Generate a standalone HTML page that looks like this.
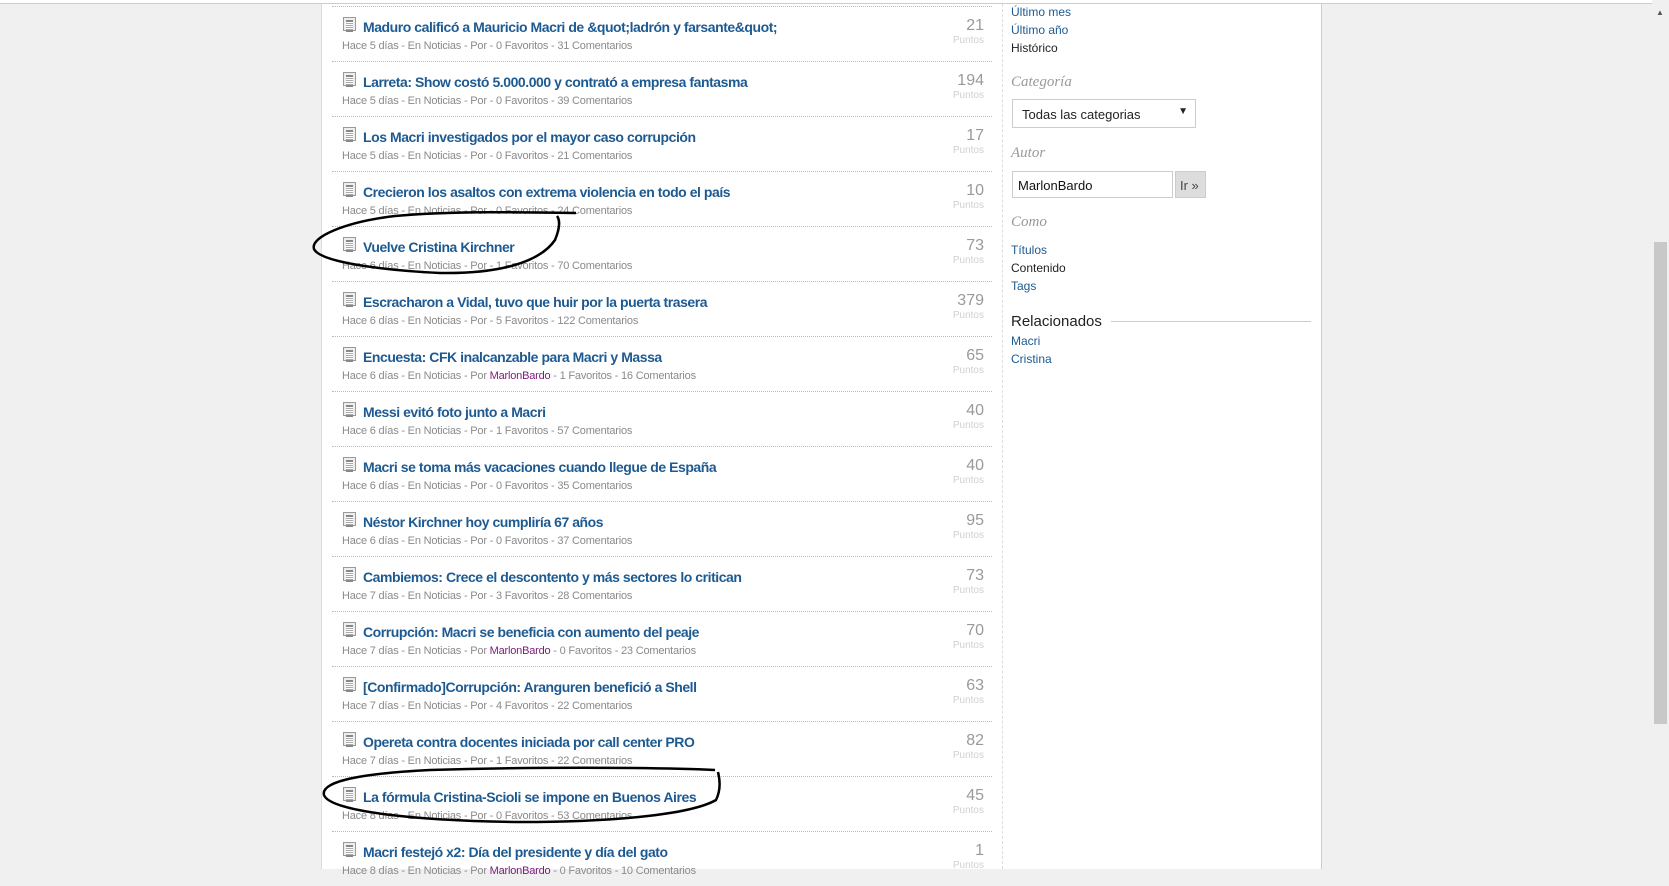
<!DOCTYPE html>
<html><head><meta charset="utf-8"><style>
*{margin:0;padding:0;box-sizing:border-box}
body{width:1669px;height:869px;overflow:hidden;background:#f0f0f0;font-family:"Liberation Sans",sans-serif;position:relative}
#panel{position:absolute;left:321px;top:4px;width:1001px;height:865px;background:#fff;border-left:1px solid #ddd;border-right:1px solid #ccc}
#topline{position:absolute;left:0;top:0;width:1652px;height:4px;background:#fff;border-bottom:1px solid #ccc}
.vline{position:absolute;left:1002px;top:4px;height:865px;border-left:1px dashed #ddd}
.row{position:absolute;left:332px;width:660px;height:55px;border-top:1px dotted #bbb}
.ic{position:absolute;left:11px;top:10px;width:13px;height:14px;border:1px solid #999;background:#eee}
.ic:after{content:"";position:absolute;left:2px;top:2px;width:7px;height:8px;border-top:2px solid #888;border-bottom:2px solid #888;background:repeating-linear-gradient(#fff 0 1px,#aaa 1px 2px)}
.t{position:absolute;left:31px;top:12px;font-size:14px;font-weight:bold;color:#1d5a92;white-space:nowrap;letter-spacing:-0.45px}
.m{position:absolute;left:10px;top:33px;font-size:11px;color:#8a8a8a;white-space:nowrap;letter-spacing:-0.2px}
.m b{font-weight:normal;color:#7b1a78}
.p{position:absolute;right:8px;top:10px;font-size:16px;color:#9a9a9a;text-align:right}
.p span{display:block;font-size:10px;color:#d0d0d0;margin-top:0px}
.s{position:absolute;left:1011px;font-size:12px;white-space:nowrap}
.a{color:#1d5a92}.k{color:#222}
.h{font-family:"Liberation Serif",serif;font-style:italic;color:#999;font-size:15px}
#sb{position:absolute;left:1652px;top:0;width:17px;height:869px;background:#f0f0f0}
#th{position:absolute;left:1654px;top:242px;width:13px;height:482px;background:#c8c8c8}
</style></head><body>
<div id="topline"></div>
<div id="panel"></div>
<div class="vline"></div>

<div class="row" style="top:6px"><div class="ic"></div><div class="t">Maduro calificó a Mauricio Macri de &amp;quot;ladrón y farsante&amp;quot;</div><div class="m">Hace 5 días - En Noticias - Por - 0 Favoritos - 31 Comentarios</div><div class="p">21<span>Puntos</span></div></div>
<div class="row" style="top:61px"><div class="ic"></div><div class="t">Larreta: Show costó 5.000.000 y contrató a empresa fantasma</div><div class="m">Hace 5 días - En Noticias - Por - 0 Favoritos - 39 Comentarios</div><div class="p">194<span>Puntos</span></div></div>
<div class="row" style="top:116px"><div class="ic"></div><div class="t">Los Macri investigados por el mayor caso corrupción</div><div class="m">Hace 5 días - En Noticias - Por - 0 Favoritos - 21 Comentarios</div><div class="p">17<span>Puntos</span></div></div>
<div class="row" style="top:171px"><div class="ic"></div><div class="t">Crecieron los asaltos con extrema violencia en todo el país</div><div class="m">Hace 5 días - En Noticias - Por - 0 Favoritos - 24 Comentarios</div><div class="p">10<span>Puntos</span></div></div>
<div class="row" style="top:226px"><div class="ic"></div><div class="t">Vuelve Cristina Kirchner</div><div class="m">Hace 6 días - En Noticias - Por - 1 Favoritos - 70 Comentarios</div><div class="p">73<span>Puntos</span></div></div>
<div class="row" style="top:281px"><div class="ic"></div><div class="t">Escracharon a Vidal, tuvo que huir por la puerta trasera</div><div class="m">Hace 6 días - En Noticias - Por - 5 Favoritos - 122 Comentarios</div><div class="p">379<span>Puntos</span></div></div>
<div class="row" style="top:336px"><div class="ic"></div><div class="t">Encuesta: CFK inalcanzable para Macri y Massa</div><div class="m">Hace 6 días - En Noticias - Por <b>MarlonBardo</b> - 1 Favoritos - 16 Comentarios</div><div class="p">65<span>Puntos</span></div></div>
<div class="row" style="top:391px"><div class="ic"></div><div class="t">Messi evitó foto junto a Macri</div><div class="m">Hace 6 días - En Noticias - Por - 1 Favoritos - 57 Comentarios</div><div class="p">40<span>Puntos</span></div></div>
<div class="row" style="top:446px"><div class="ic"></div><div class="t">Macri se toma más vacaciones cuando llegue de España</div><div class="m">Hace 6 días - En Noticias - Por - 0 Favoritos - 35 Comentarios</div><div class="p">40<span>Puntos</span></div></div>
<div class="row" style="top:501px"><div class="ic"></div><div class="t">Néstor Kirchner hoy cumpliría 67 años</div><div class="m">Hace 6 días - En Noticias - Por - 0 Favoritos - 37 Comentarios</div><div class="p">95<span>Puntos</span></div></div>
<div class="row" style="top:556px"><div class="ic"></div><div class="t">Cambiemos: Crece el descontento y más sectores lo critican</div><div class="m">Hace 7 días - En Noticias - Por - 3 Favoritos - 28 Comentarios</div><div class="p">73<span>Puntos</span></div></div>
<div class="row" style="top:611px"><div class="ic"></div><div class="t">Corrupción: Macri se beneficia con aumento del peaje</div><div class="m">Hace 7 días - En Noticias - Por <b>MarlonBardo</b> - 0 Favoritos - 23 Comentarios</div><div class="p">70<span>Puntos</span></div></div>
<div class="row" style="top:666px"><div class="ic"></div><div class="t">[Confirmado]Corrupción: Aranguren benefició a Shell</div><div class="m">Hace 7 días - En Noticias - Por - 4 Favoritos - 22 Comentarios</div><div class="p">63<span>Puntos</span></div></div>
<div class="row" style="top:721px"><div class="ic"></div><div class="t">Opereta contra docentes iniciada por call center PRO</div><div class="m">Hace 7 días - En Noticias - Por - 1 Favoritos - 22 Comentarios</div><div class="p">82<span>Puntos</span></div></div>
<div class="row" style="top:776px"><div class="ic"></div><div class="t">La fórmula Cristina-Scioli se impone en Buenos Aires</div><div class="m">Hace 8 días - En Noticias - Por - 0 Favoritos - 53 Comentarios</div><div class="p">45<span>Puntos</span></div></div>
<div class="row" style="top:831px"><div class="ic"></div><div class="t">Macri festejó x2: Día del presidente y día del gato</div><div class="m">Hace 8 días - En Noticias - Por <b>MarlonBardo</b> - 0 Favoritos - 10 Comentarios</div><div class="p">1<span>Puntos</span></div></div>

<div class="s a" style="top:5px">Último mes</div>
<div class="s a" style="top:23px">Último año</div>
<div class="s k" style="top:41px">Histórico</div>
<div class="s h" style="top:74px">Categoría</div>
<div style="position:absolute;left:1012px;top:99px;width:184px;height:29px;border:1px solid #ccc;font-size:13px;padding:7px 9px;color:#222">Todas las categorias<span style="position:absolute;right:7px;top:6px;font-size:10px">▼</span></div>
<div class="s h" style="top:145px">Autor</div>
<div style="position:absolute;left:1012px;top:171px;width:161px;height:27px;border:1px solid #ccc;font-size:13px;padding:6px 5px;color:#111">MarlonBardo</div>
<div style="position:absolute;left:1175px;top:171px;width:31px;height:27px;border:1px solid #ccc;background:#ddd;font-size:13px;padding:6px 4px;color:#444">Ir »</div>
<div class="s h" style="top:214px">Como</div>
<div class="s a" style="top:243px">Títulos</div>
<div class="s k" style="top:261px">Contenido</div>
<div class="s a" style="top:279px">Tags</div>
<div class="s k" style="top:313px;font-size:15px">Relacionados</div>
<div style="position:absolute;left:1111px;top:321px;width:200px;border-top:1px solid #ccc"></div>
<div class="s a" style="top:334px">Macri</div>
<div class="s a" style="top:352px">Cristina</div>

<div id="sb"></div><div id="th"></div>
<div style="position:absolute;left:1656px;top:8px;font-size:8px;color:#555">▲</div>

<svg style="position:absolute;left:0;top:0" width="1669" height="869">
<path d="M576 213 C520 212 450 211 395 216 C345 222 310 237 314 249 C320 262 380 270 440 273 C500 274 540 262 555 240 C560 228 560 220 557 216" fill="none" stroke="#000" stroke-width="2.5"/>
<path d="M715 770 C650 767 520 767 430 770 C370 773 320 780 324 795 C330 812 420 821 520 822 C610 822 690 815 716 800 C721 790 720 780 718 772" fill="none" stroke="#000" stroke-width="2.5"/>
</svg>
</body></html>
